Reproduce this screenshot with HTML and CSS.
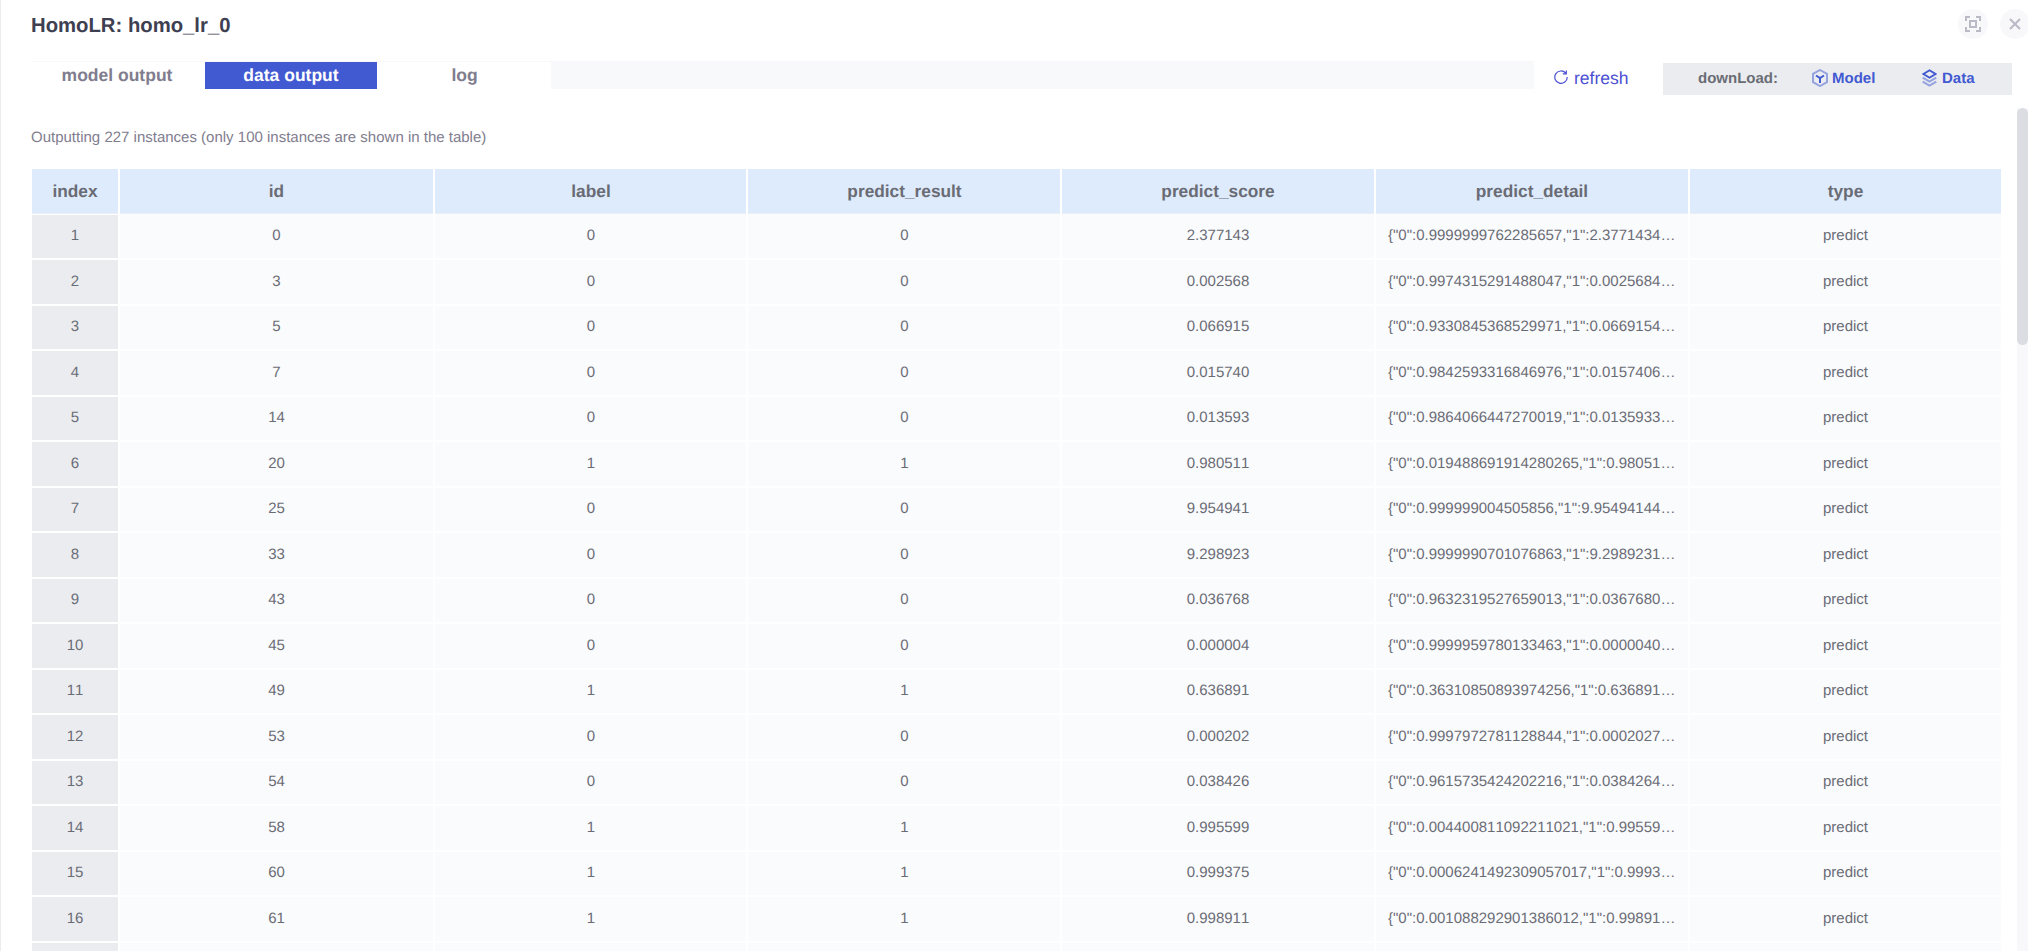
FILE: index.html
```html
<!DOCTYPE html>
<html lang="en">
<head>
<meta charset="utf-8">
<title>HomoLR: homo_lr_0</title>
<link rel="stylesheet" href="styles.css">
</head>
<body>
<main class="dialog">
  <header class="dialog-header">
    <h1 class="title">HomoLR: homo_lr_0</h1>
    <div class="window-actions">
      <button class="round-btn" aria-label="Full screen">
        <svg width="16" height="16" viewBox="0 0 16 16" fill="none" stroke="#bbbbc8" stroke-width="2"><path d="M1 5V1h4M11 1h4v4M15 11v4h-4M5 15H1v-4M5 5h6v6H5z"/></svg>
      </button>
      <button class="round-btn" aria-label="Close">
        <svg width="12" height="12" viewBox="0 0 12 12" fill="none" stroke="#bbbbc8" stroke-width="2.200"><path d="M1 1l10 10M11 1L1 11"/></svg>
      </button>
    </div>
  </header>
  <div class="toolbar">
    <nav class="tabs">
      <a class="tab model-tab">model output</a>
      <a class="tab active">data output</a>
      <a class="tab log-tab">log</a>
      <span class="tab-rest"></span>
    </nav>
    <button class="refresh">
      <svg width="14" height="14" viewBox="0 0 14 14" fill="none" stroke="#4b4fd2" stroke-width="1.2"><path d="M11.6 3A6.2 6.2 0 1 0 13.2 7M12.3.4v3.400H8.800"/></svg>
      <span>refresh</span>
    </button>
    <div class="download">
      <span class="download-label">downLoad:</span>
      <a class="download-link model">
        <svg width="16" height="18" viewBox="0 0 16 18" fill="none" stroke="#4159d1"><path d="M8 1l7 3.900v8.200L8 17l-7-3.900V4.900z" stroke-width="2" opacity=".5"/><path d="M4 6.500L8 9l4-2.500M8 9v5" stroke-width="2"/></svg>
        <span>Model</span>
      </a>
      <a class="download-link data">
        <svg width="15" height="18" viewBox="0 0 15 18" fill="none" stroke="#4159d1"><path d="M7.500 1.300l6 3.700-6 3.700-6-3.700z" stroke-width="1.900"/><path d="M.7 8.600l6.800 4 6.800-4M.7 12.600l6.800 4 6.800-4" stroke-width="2" opacity=".5"/></svg>
        <span>Data</span>
      </a>
    </div>
  </div>
  <section class="content">
    <div class="output">
      <p class="summary">Outputting 227 instances (only 100 instances are shown in the table)</p>
      <div class="table" id="table">
        <div class="row head"><div>index</div><div>id</div><div>label</div><div>predict_result</div><div>predict_score</div><div>predict_detail</div><div>type</div></div>
      </div>
    </div>
    <div class="scrollbar"><div class="thumb"></div></div>
  </section>
</main>
<script src="script.js"></script>
</body>
</html>
```
FILE: styles.css
```css
* { box-sizing: border-box; }
body { margin: 0; background: #fff; overflow: hidden; font-family: "Liberation Sans", Arial, sans-serif; font-size: 15px; color: #6a6c75; text-rendering: geometricPrecision; }
button { border: 0; padding: 0; background: none; font: inherit; text-rendering: inherit; }
.dialog { height: 951px; display: flex; flex-direction: column; border-left: 1px solid #ebecf0; padding-left: 30px; overflow: hidden; }
.dialog-header { display: flex; justify-content: space-between; height: 61px; flex: none; }
.title { margin: 15px 0 0; font-size: 20.3px; line-height: 23px; font-weight: bold; color: #3e4052; }
.window-actions { display: flex; gap: 12px; padding-top: 9px; margin-right: -2px; }
.round-btn { width: 30px; height: 30px; border-radius: 50%; background: #f8f8fa; display: flex; align-items: center; justify-content: center; flex: none; }
.toolbar { display: flex; height: 47px; flex: none; }
.tabs { display: flex; width: 1503px; height: 28px; border-top: 1px solid #f8f8fa; }
.tab { width: 174px; text-align: center; font-size: 17.5px; line-height: 26px; font-weight: bold; color: #7f7d8e; }
.tab.active { width: 172px; height: 27px; background: #4159d1; color: #fff; }
.tab.model-tab { padding-right: 2px; }
.tab.log-tab { padding-left: 1px; }
.tab-rest { flex: 1; background: #f8f9fb; }
.refresh { display: flex; align-items: flex-start; gap: 6px; margin: 7px 0 0 20px; width: 109px; height: 24px; color: #4b4fd2; font-size: 17.5px; line-height: 20px; }
.refresh svg { margin-top: 2px; }
.download { display: flex; width: 349px; height: 32px; margin-top: 2px; background: #ebecf0; font-weight: bold; line-height: 32px; }
.download-label { margin-left: 35px; width: 114px; }
.download-link { display: flex; gap: 4px; color: #4159d1; }
.download-link.model { width: 110px; }
.download-link.data { gap: 5px; }
.download-link svg { margin-top: 6px; }
.content { display: flex; justify-content: space-between; flex: 1; min-height: 0; }
.output { padding: 21px 0 0 0; }
.summary { margin: 0; line-height: 18px; color: #7f7d8e; }
.table { margin: 22px 0 0 1px; }
.row { display: grid; grid-template-columns: 86px 313px 311px 312px 312px 312px 311px; column-gap: 2px; height: 43px; margin-bottom: 2px; line-height: 42px; text-align: center; font-kerning: none; }
.row:nth-child(odd) { height: 44px; line-height: 44px; }
.row > div { background: #fafbfd; white-space: nowrap; overflow: hidden; text-overflow: ellipsis; padding: 0 12px; }
.row > div:first-child { background: #ebecf0; }
.row > div:nth-child(3), .row > div:nth-child(4) { padding-left: 13px; }
.row:not(.head) > div:nth-child(6) { text-align: left; padding-right: 0; }
.row:nth-child(2) > div:not(:first-child) { margin-top: -1px; padding-top: 1px; }
.row.head { line-height: 45px; font-size: 17.3px; font-weight: bold; height: 46px; margin-bottom: 0; }
.row.head > div, .row.head > div:first-child { background: #deebfc; height: 45px; border-bottom: 1px solid #ebeef5; }
.scrollbar { width: 11px; background: #f8f8fa; }
.thumb { height: 237px; border-radius: 6px; background: #dcdde2; }
```
FILE: script.js
```js
const records = [
  [0, 0, "2.377143", '{"0":0.9999999762285657,"1":2.3771434…'],
  [3, 0, "0.002568", '{"0":0.9974315291488047,"1":0.0025684…'],
  [5, 0, "0.066915", '{"0":0.9330845368529971,"1":0.0669154…'],
  [7, 0, "0.015740", '{"0":0.9842593316846976,"1":0.0157406…'],
  [14, 0, "0.013593", '{"0":0.9864066447270019,"1":0.0135933…'],
  [20, 1, "0.980511", '{"0":0.019488691914280265,"1":0.98051…'],
  [25, 0, "9.954941", '{"0":0.999999004505856,"1":9.95494144…'],
  [33, 0, "9.298923", '{"0":0.9999990701076863,"1":9.2989231…'],
  [43, 0, "0.036768", '{"0":0.9632319527659013,"1":0.0367680…'],
  [45, 0, "0.000004", '{"0":0.9999959780133463,"1":0.0000040…'],
  [49, 1, "0.636891", '{"0":0.36310850893974256,"1":0.636891…'],
  [53, 0, "0.000202", '{"0":0.9997972781128844,"1":0.0002027…'],
  [54, 0, "0.038426", '{"0":0.9615735424202216,"1":0.0384264…'],
  [58, 1, "0.995599", '{"0":0.004400811092211021,"1":0.99559…'],
  [60, 1, "0.999375", '{"0":0.0006241492309057017,"1":0.9993…'],
  [61, 1, "0.998911", '{"0":0.001088292901386012,"1":0.99891…'],
];
const table = document.getElementById("table");

function addRow(values) {
  const row = document.createElement("div");
  row.className = "row";
  for (const value of values) {
    const cell = document.createElement("div");
    cell.textContent = value;
    row.append(cell);
  }
  table.append(row);
}

records.forEach(([id, label, score, detail], i) => {
  addRow([i + 1, id, label, label, score, detail, "predict"]);
});
addRow(["", "", "", "", "", "", ""]);
```
